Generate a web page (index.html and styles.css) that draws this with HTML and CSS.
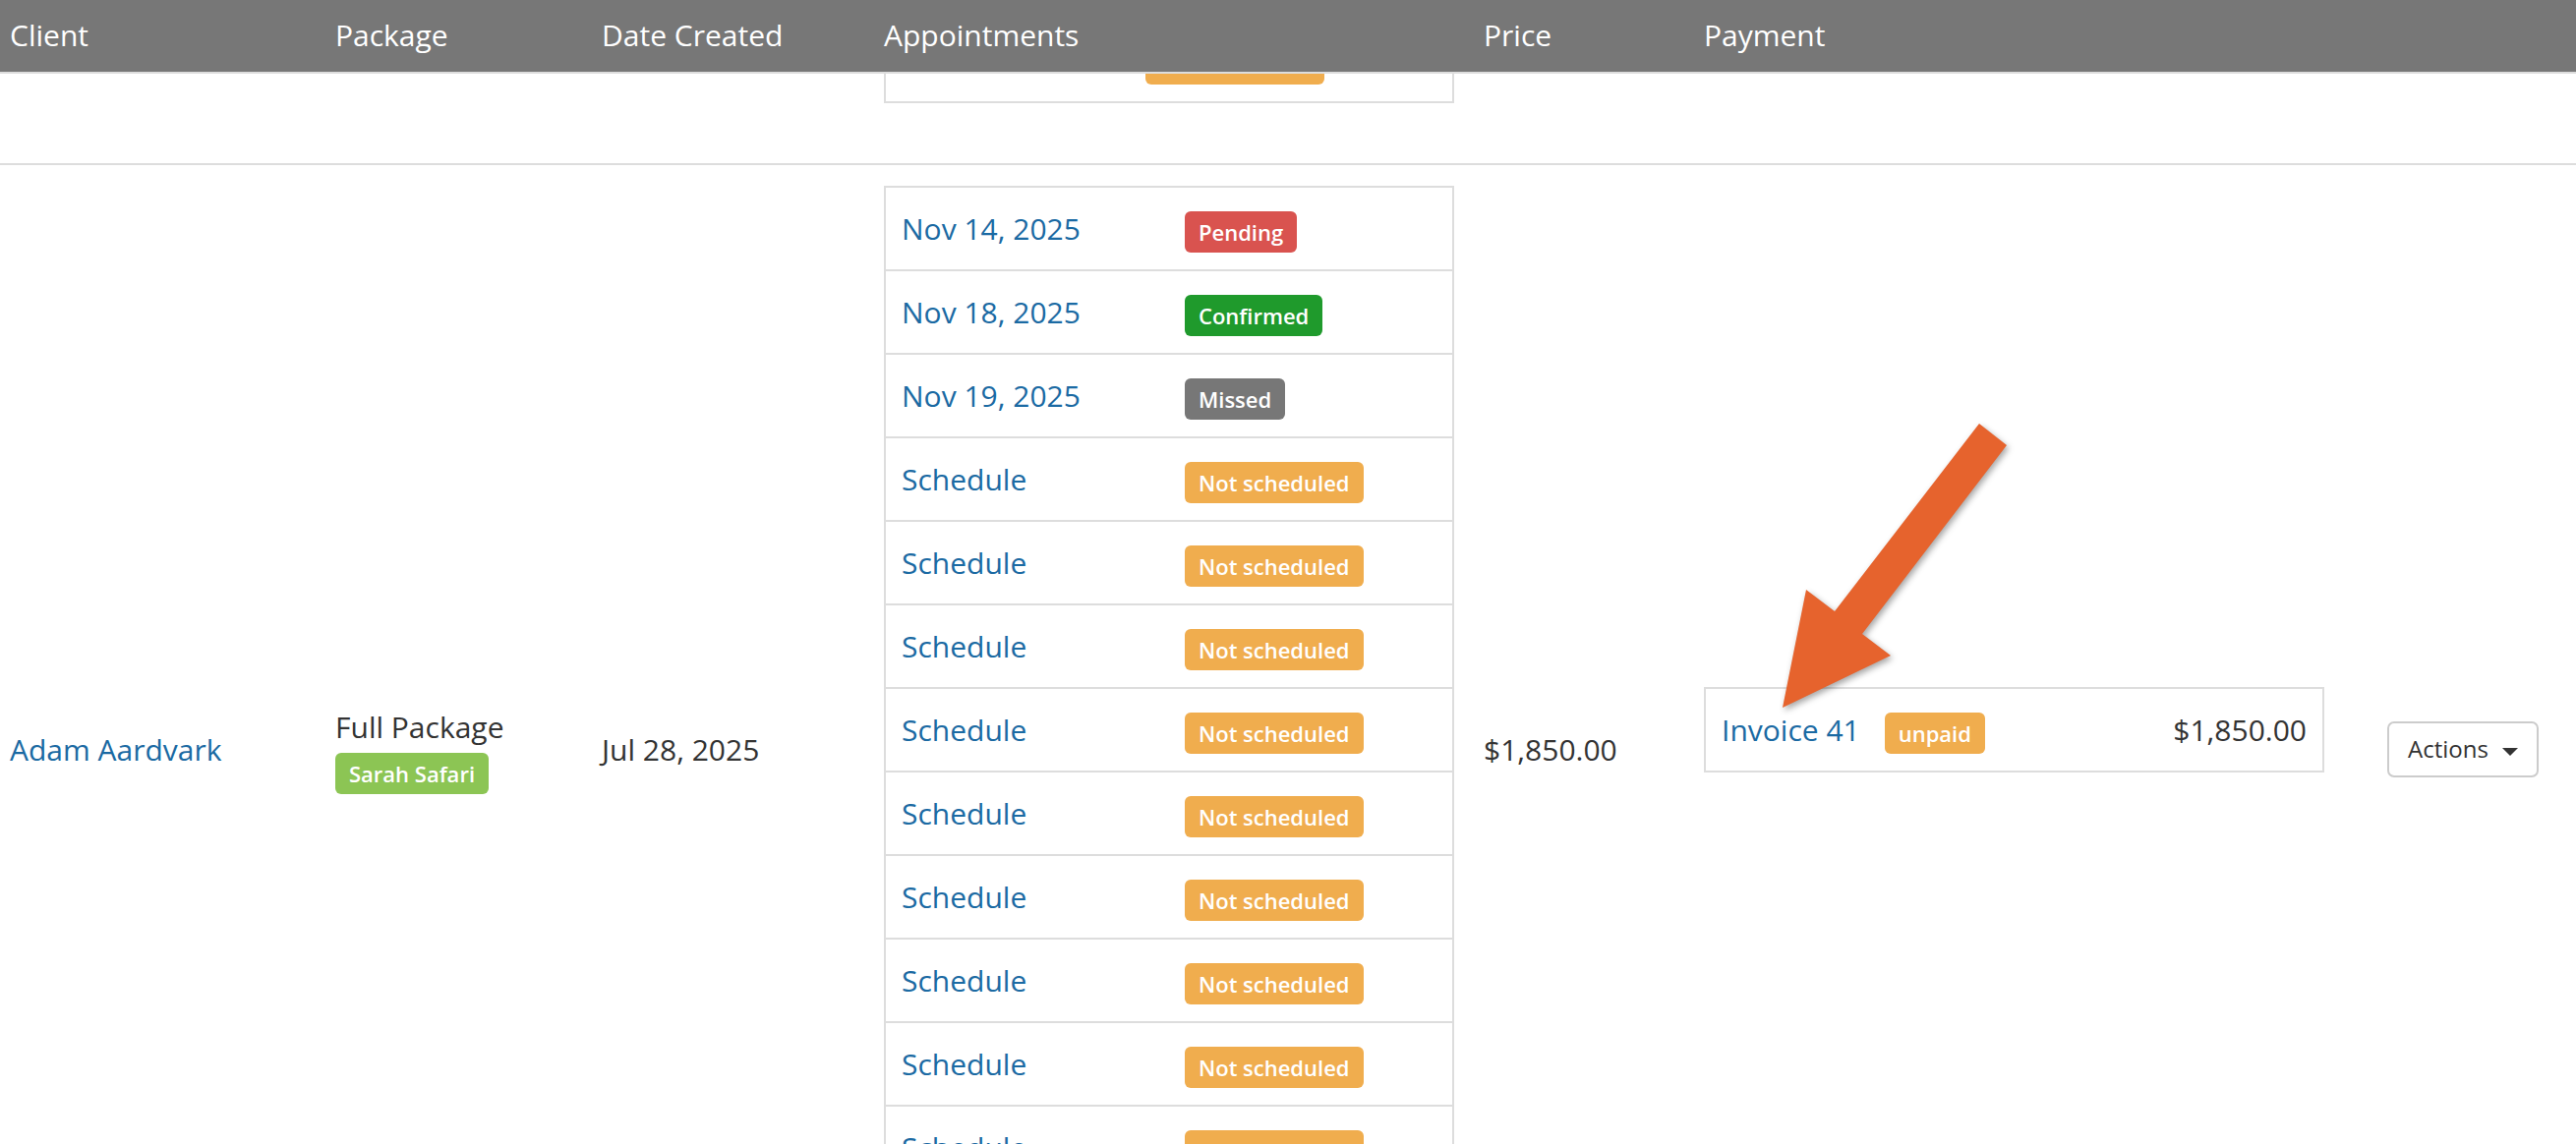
FILE: index.html
```html
<!DOCTYPE html>
<html lang="en">
<head>
    <meta charset="UTF-8">
    <meta name="viewport" content="width=device-width, initial-scale=1.0">
    <title>Packages</title>
    <link rel="stylesheet" href="styles.css">
</head>
<body>
    <div class="pkg-table">
        <div class="thead">
            <div class="th">Client</div>
            <div class="th">Package</div>
            <div class="th">Date Created</div>
            <div class="th">Appointments</div>
            <div class="th">Price</div>
            <div class="th">Payment</div>
            <div class="th"></div>
        </div>

        <div class="tbody">
            <!-- row scrolled up under the header -->
            <div class="tr">
                <div class="td"></div>
                <div class="td"></div>
                <div class="td"></div>
                <div class="td">
                    <div class="appts appts-short">
                        <div class="appt">
                            <a href="#" class="link">Schedule</a>
                            <span><span class="label label-warning">Not scheduled</span></span>
                        </div>
                    </div>
                </div>
                <div class="td"></div>
                <div class="td"></div>
                <div class="td"></div>
            </div>

            <div class="tr">
                <div class="td"><a href="#" class="link">Adam Aardvark</a></div>
                <div class="td">
                    <div class="package">
                        <span>Full Package</span>
                        <span class="label label-staff">Sarah Safari</span>
                    </div>
                </div>
                <div class="td">Jul 28, 2025</div>
                <div class="td">
                    <div class="appts">
                        <div class="appt">
                            <a href="#" class="link">Nov 14, 2025</a>
                            <span><span class="label label-danger">Pending</span></span>
                        </div>
                        <div class="appt">
                            <a href="#" class="link">Nov 18, 2025</a>
                            <span><span class="label label-success">Confirmed</span></span>
                        </div>
                        <div class="appt">
                            <a href="#" class="link">Nov 19, 2025</a>
                            <span><span class="label label-default">Missed</span></span>
                        </div>
                        <div class="appt">
                            <a href="#" class="link">Schedule</a>
                            <span><span class="label label-warning">Not scheduled</span></span>
                        </div>
                        <div class="appt">
                            <a href="#" class="link">Schedule</a>
                            <span><span class="label label-warning">Not scheduled</span></span>
                        </div>
                        <div class="appt">
                            <a href="#" class="link">Schedule</a>
                            <span><span class="label label-warning">Not scheduled</span></span>
                        </div>
                        <div class="appt">
                            <a href="#" class="link">Schedule</a>
                            <span><span class="label label-warning">Not scheduled</span></span>
                        </div>
                        <div class="appt">
                            <a href="#" class="link">Schedule</a>
                            <span><span class="label label-warning">Not scheduled</span></span>
                        </div>
                        <div class="appt">
                            <a href="#" class="link">Schedule</a>
                            <span><span class="label label-warning">Not scheduled</span></span>
                        </div>
                        <div class="appt">
                            <a href="#" class="link">Schedule</a>
                            <span><span class="label label-warning">Not scheduled</span></span>
                        </div>
                        <div class="appt">
                            <a href="#" class="link">Schedule</a>
                            <span><span class="label label-warning">Not scheduled</span></span>
                        </div>
                        <div class="appt">
                            <a href="#" class="link">Schedule</a>
                            <span><span class="label label-warning">Not scheduled</span></span>
                        </div>
                        <div class="appt">
                            <a href="#" class="link">Schedule</a>
                            <span><span class="label label-warning">Not scheduled</span></span>
                        </div>
                    </div>
                </div>
                <div class="td">$1,850.00</div>
                <div class="td">
                    <div class="invoice">
                        <a href="#" class="link">Invoice 41</a>
                        <span class="label label-warning invoice-status">unpaid</span>
                        <span class="invoice-amount">$1,850.00</span>
                    </div>
                </div>
                <div class="td">
                    <button class="btn-actions">Actions <span class="caret"></span></button>
                </div>
            </div>
        </div>
    </div>

    <!-- annotation arrow drawn on top of the screenshot -->
    <svg class="annotation" width="2620" height="1164" viewBox="0 0 2620 1164">
        <polygon class="arrow" points="2013,431 2041,453 1894,645 1923,667 1813,720 1837,600 1866,622"/>
    </svg>
</body>
</html>
```

FILE: styles.css
```css
html, body {
    margin: 0;
    padding: 0;
    overflow: hidden;
}
body {
    font-family: "Open Sans", "Liberation Sans", sans-serif;
    font-size: 30px;
    line-height: 43px;
    color: #333;
    background: #fff;
    position: relative;
    height: 1164px;
}
.link {
    color: #1b6aa3;
    text-decoration: none;
}

/* main table */
.thead,
.tr {
    display: grid;
    grid-template-columns: 331px 271px 287px 610px 224px 695px 1fr;
}
.thead {
    position: relative;
    z-index: 2;
    height: 75px;
    box-sizing: border-box;
    padding-bottom: 3px;
    background: #777;
    color: #fff;
    border-bottom: 2px solid #ddd;
    align-items: center;
}
.th {
    padding-left: 10px;
}
.tbody {
    margin-top: -80px;
}
.tr {
    border-top: 2px solid #ddd;
    padding: 21px 0;
    align-items: center;
}
.td {
    padding-left: 10px;
    min-width: 0;
}

/* labels */
.label {
    display: inline-block;
    font-size: 22px;
    font-weight: 600;
    line-height: 26px;
    padding: 8px 14px;
    border-radius: 6px;
    color: #fff;
    white-space: nowrap;
}
.label-warning { background: #f0ad4e; }
.label-danger { background: #d9534f; }
.label-success { background: #1f9a2c; }
.label-default { background: #777; }
.label-staff { background: #8cc554; }

/* package cell */
.package {
    display: flex;
    flex-direction: column;
    align-items: flex-start;
    gap: 5px;
}

/* nested appointments list */
.appts {
    width: 576px;
    border: 2px solid #ddd;
    margin-bottom: 40px;
}
.appt {
    display: grid;
    grid-template-columns: 1fr 1fr;
    align-items: center;
    height: 83px;
    border-top: 2px solid #ddd;
}
.appt:first-child {
    border-top: 0;
}
.appt > * {
    padding: 0 16px;
}
.appt .label {
    margin-top: 6px;
}
.appts-short .appt {
    grid-template-columns: 248px 1fr;
}

/* payment */
.invoice {
    display: flex;
    align-items: center;
    width: 631px;
    height: 87px;
    box-sizing: border-box;
    padding: 0 16px;
    border: 2px solid #ddd;
    margin-bottom: 40px;
}
.invoice-status {
    margin-left: 25px;
    margin-top: 6px;
}
.invoice-amount {
    margin-left: auto;
}

/* actions */
.btn-actions {
    font-family: "Open Sans", "Liberation Sans", sans-serif;
    font-size: 24px;
    line-height: 36px;
    color: #333;
    background: #fff;
    border: 2px solid #ccc;
    border-radius: 7px;
    padding: 8px 19px 9px;
    cursor: pointer;
}
.caret {
    display: inline-block;
    width: 0;
    height: 0;
    margin-left: 8px;
    vertical-align: middle;
    border-top: 8px solid #333;
    border-left: 8px solid transparent;
    border-right: 8px solid transparent;
}

/* arrow overlay */
.annotation {
    position: absolute;
    top: 0;
    left: 0;
    z-index: 3;
    pointer-events: none;
}
.arrow {
    fill: #e6632d;
    filter: drop-shadow(2px 3px 3px rgba(0, 0, 0, 0.35));
}
```
